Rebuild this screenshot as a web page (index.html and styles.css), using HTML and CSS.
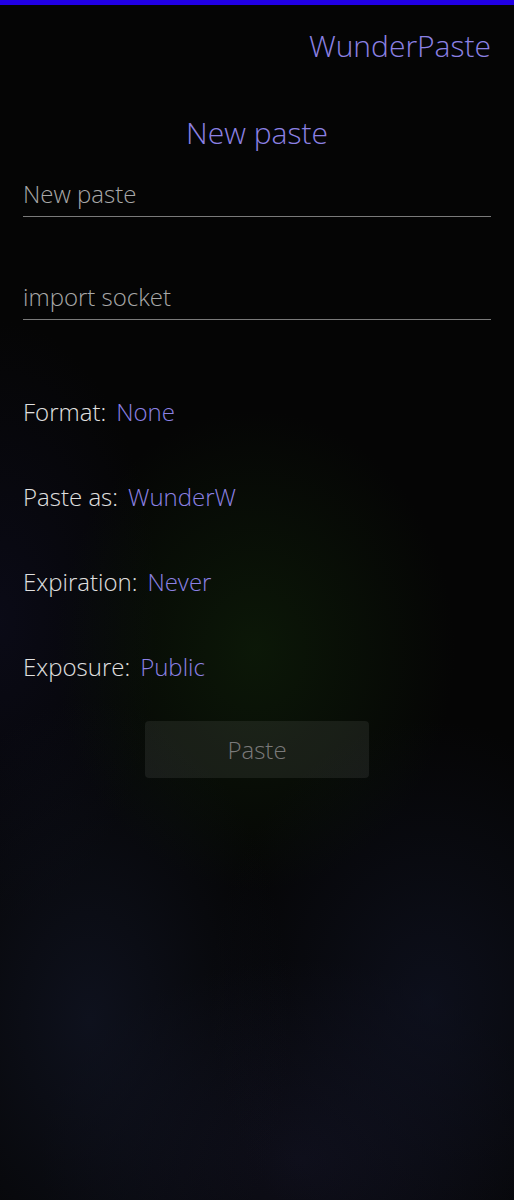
FILE: index.html
```html
<!DOCTYPE html>
<html>
<head>
<meta charset="utf-8">
<link rel="stylesheet" href="styles.css">
</head>
<body>
<div class="topbar"></div>
<main class="page">
  <header class="app-title">WunderPaste</header>
  <h1 class="page-title">New paste</h1>
  <div class="field"><span class="field-text">New paste</span></div>
  <div class="field field-second"><span class="field-text">import socket</span></div>
  <div class="options">
    <div class="option"><span class="label">Format:</span><span class="value">None</span></div>
    <div class="option"><span class="label">Paste as:</span><span class="value">WunderW</span></div>
    <div class="option"><span class="label">Expiration:</span><span class="value">Never</span></div>
    <div class="option"><span class="label">Exposure:</span><span class="value">Public</span></div>
  </div>
  <div class="actions"><button class="paste-btn">Paste</button></div>
</main>
</body>
</html>
```
FILE: styles.css
```css
html, body { margin: 0; padding: 0; }
body {
  width: 514px;
  min-height: 1200px;
  font-family: "Open Sans", "Noto Sans", sans-serif;
  font-weight: 300;
  color: #e2e2e2;
  background:
    radial-gradient(ellipse 200px 240px at 255px 650px, rgba(18,42,10,0.5), rgba(0,0,0,0) 100%),
    radial-gradient(ellipse 200px 320px at 90px 1020px, rgba(20,25,45,0.6), rgba(0,0,0,0) 100%),
    radial-gradient(ellipse 220px 280px at 430px 1000px, rgba(18,22,42,0.6), rgba(0,0,0,0) 100%),
    radial-gradient(ellipse 260px 200px at 300px 1160px, rgba(18,18,34,0.7), rgba(0,0,0,0) 100%),
    radial-gradient(ellipse 160px 300px at 0px 620px, rgba(14,14,34,0.6), rgba(0,0,0,0) 100%),
    #050505;
}
.topbar { height: 5px; background: #2100e6; }
.page { display: flex; flex-direction: column; padding: 0 23px; }
.app-title {
  text-align: right;
  font-size: 30px;
  line-height: 40px;
  margin-top: 21px;
  color: #8c81e4;
}
.page-title {
  margin: 49px 0 0;
  text-align: center;
  font-weight: 300;
  font-size: 30px;
  line-height: 36px;
  color: #8c81e4;
}
.field {
  margin-top: 25px;
  border-bottom: 1px solid #7a7a7a;
  height: 38px;
  padding-top: 2px;
  display: flex;
  align-items: flex-start;
}
.field-second { margin-top: 62px; }
.field-text { font-size: 24px; line-height: 32px; color: #a8a8a8; }
.options { display: flex; flex-direction: column; margin-top: 76px; gap: 53px; }
.option { display: flex; gap: 10px; font-size: 24px; line-height: 32px; }
.label { color: #e0e0e0; }
.value { color: #8c81e4; }
.actions { display: flex; justify-content: center; margin-top: 38px; }
.paste-btn {
  width: 224px;
  height: 57px;
  border: none;
  border-radius: 4px;
  background: rgba(255,255,255,0.07);
  color: #7a7a7a;
  font-family: inherit;
  font-weight: 300;
  font-size: 24px;
}
```
